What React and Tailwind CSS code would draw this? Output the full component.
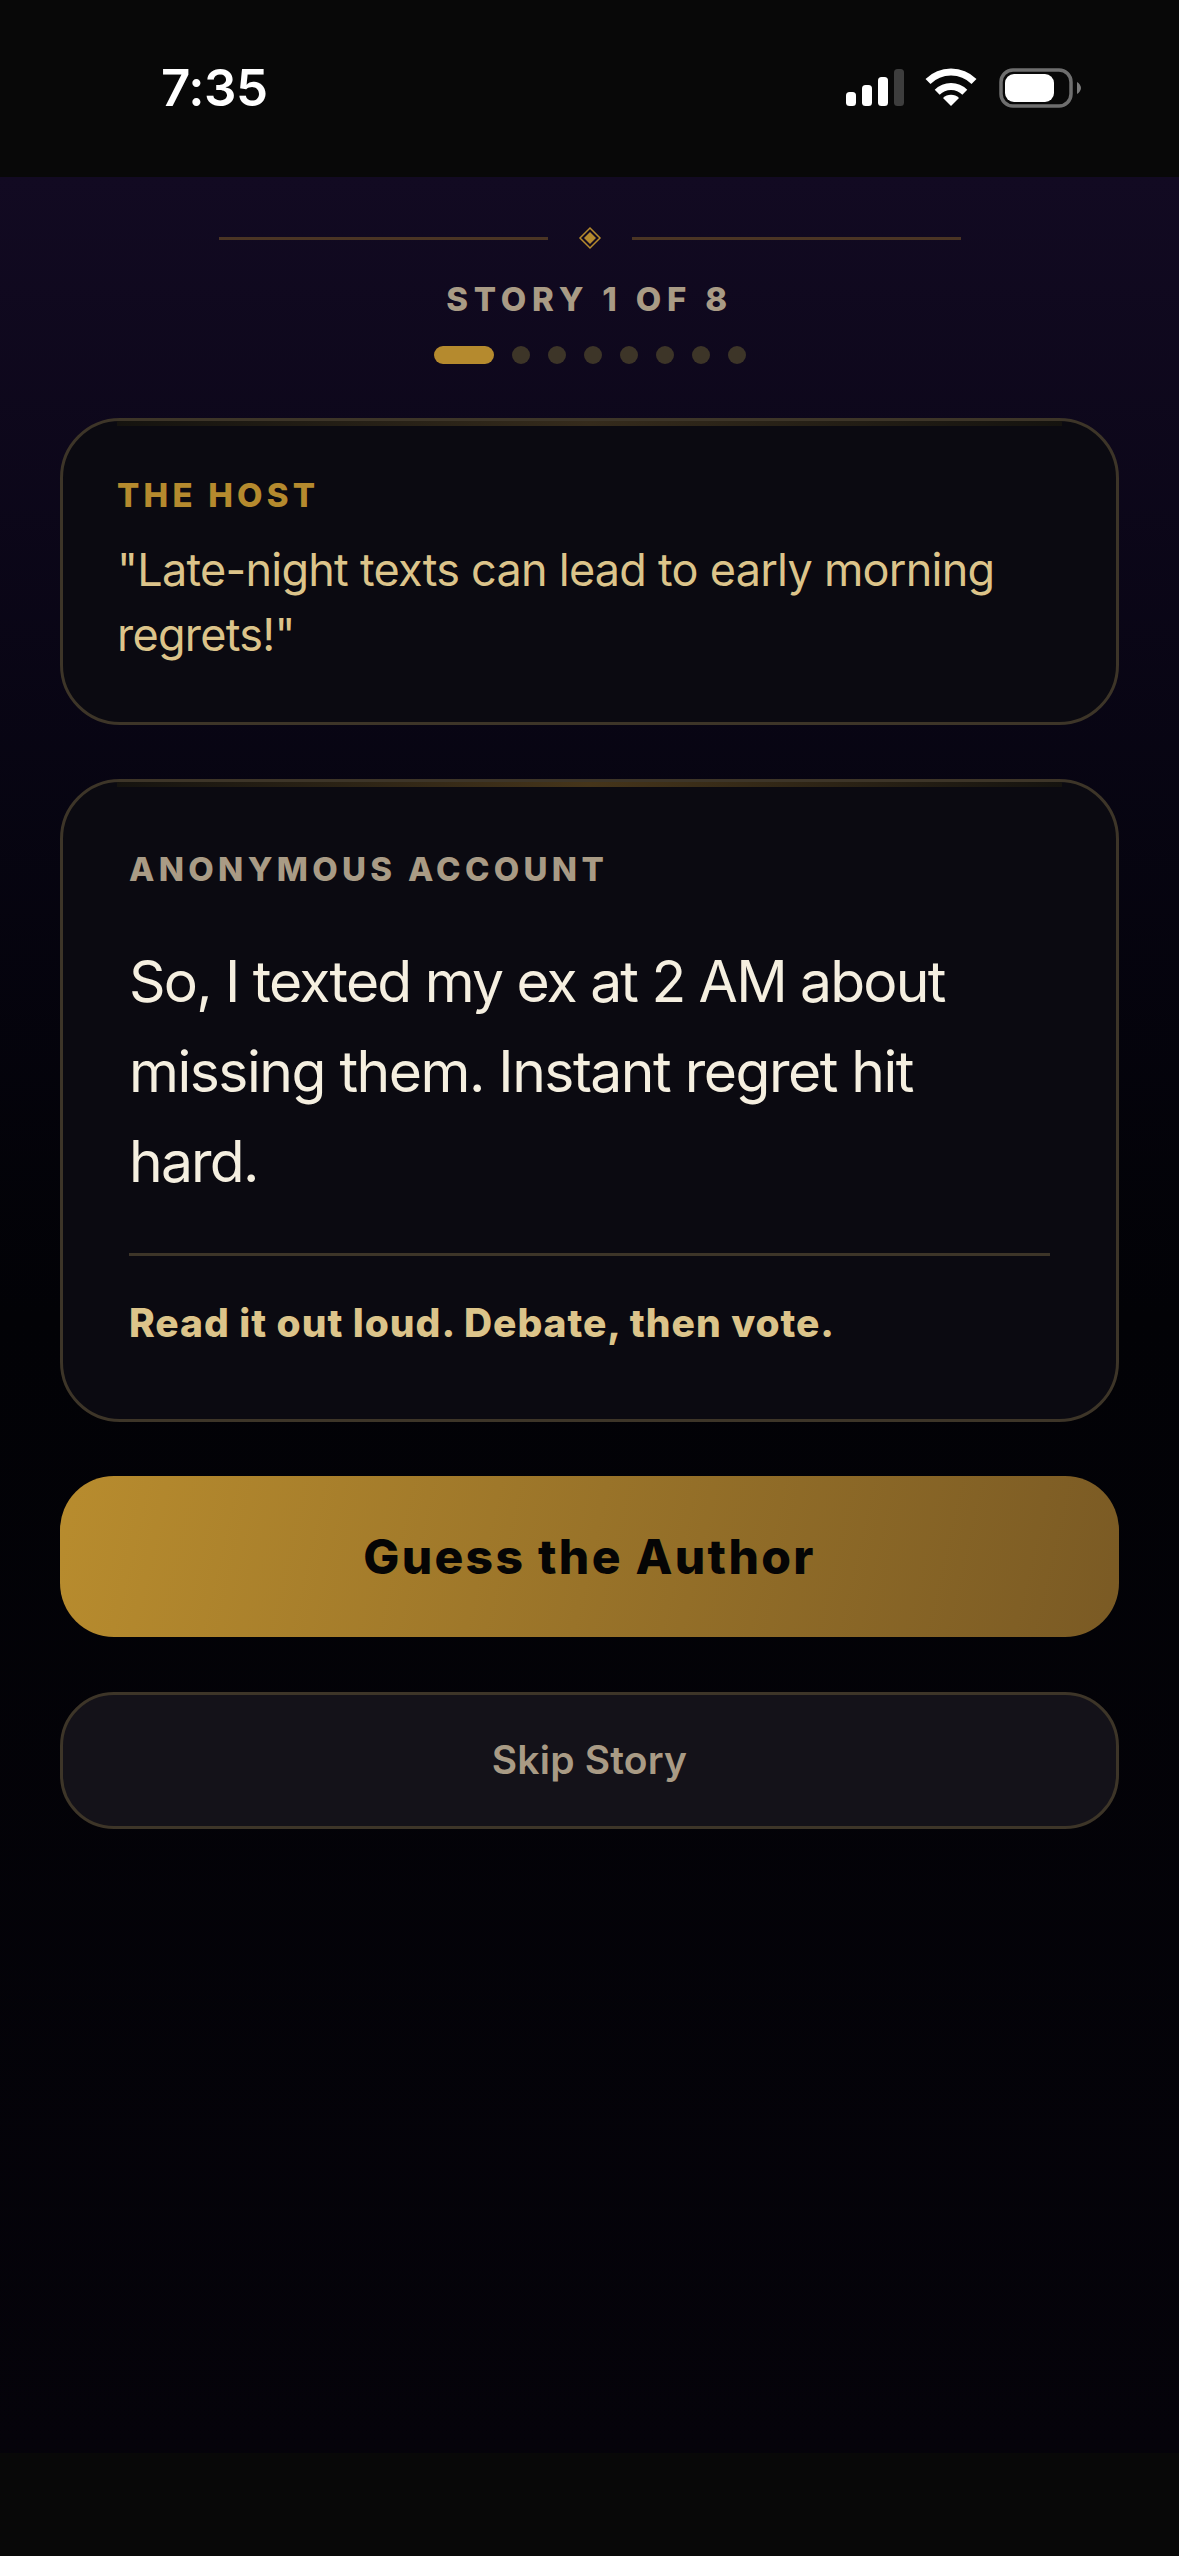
import React from "react";

function StatusIcons() {
  return (
    <svg width="237" height="40" viewBox="0 0 237 40" fill="none">
      {/* signal */}
      <rect x="0" y="24" width="10" height="14" rx="3.5" fill="#fff" />
      <rect x="16" y="17" width="10" height="21" rx="3.5" fill="#fff" />
      <rect x="32" y="9" width="10" height="29" rx="3.5" fill="#fff" />
      <rect x="48" y="1" width="10" height="37" rx="3.5" fill="#3d3d3d" />
      {/* wifi */}
      <path d="M82 13.5A32.500 32.500 0 0 1 128 13.500" stroke="#fff" strokeWidth="7" />
      <path d="M91.200 24.200A19.500 19.500 0 0 1 118.800 24.200" stroke="#fff" strokeWidth="7" />
      <path d="M105 38L97 30A11.300 11.300 0 0 1 113 30Z" fill="#fff" />
      {/* battery */}
      <rect x="155" y="2" width="70" height="36" rx="12" stroke="#6e6e6e" strokeWidth="3.500" />
      <rect x="159" y="6" width="49" height="28" rx="9" fill="#fff" />
      <path d="M231 14C233 15 235 17.500 235 20C235 22.500 233 25 231 26Z" fill="#7a7a7a" />
    </svg>
  );
}

function Diamond() {
  return (
    <svg width="24" height="24" viewBox="0 0 24 24" fill="none">
      <path d="M12 2L22 12L12 22L2 12Z" stroke="#b58a2e" strokeWidth="1.500" />
      <path d="M12 6L18 12L12 18L6 12Z" fill="#b58a2e" />
    </svg>
  );
}

function CardGlow({ strong }) {
  return (
    <div
      className={
        strong
          ? "absolute top-0 left-[54px] right-[54px] h-[5px] bg-gradient-to-r from-[#15130f] via-[#46351a] to-[#15130f]"
          : "absolute top-0 left-[54px] right-[54px] h-[5px] bg-gradient-to-r from-[#15130f] via-[#352b1c] to-[#15130f]"
      }
    />
  );
}

export default function App() {
  return (
    <main className="w-[1179px] h-[2556px] overflow-hidden flex flex-col font-['Inter',sans-serif] bg-[#05030a]">
      {/* Status bar */}
      <div className="h-[177px] shrink-0 bg-[#080808] flex items-start justify-between pl-[161px] pr-[96px] pt-[58px]">
        <span className="text-[51px] leading-[60px] font-semibold text-white tracking-[-0.5px]">7:35</span>
        <div className="pt-[10px]">
          <StatusIcons />
        </div>
      </div>

      <div className="flex-1 flex flex-col px-[60px] bg-gradient-to-b from-[#120a22] via-[#020206] via-[50%] to-[#05030a]">
        {/* Header */}
        <div className="flex flex-col items-center pt-[49px]">
          <div className="flex items-center w-[742px] gap-[30px] h-[24px]">
            <div className="flex-1 h-[3px] bg-[#4b3524]" />
            <Diamond />
            <div className="flex-1 h-[3px] bg-[#4b3524]" />
          </div>
          <div className="mt-[29px] text-[33px] leading-[40px] font-extrabold tracking-[5.8px] text-[#a99b85]">
            STORY 1 OF 8
          </div>
          <div className="mt-[27px] flex items-center gap-[18px]">
            <div className="w-[60px] h-[18px] rounded-full bg-[#b58a2e]" />
            {[1, 2, 3, 4, 5, 6, 7].map((i) => (
              <div key={i} className="w-[18px] h-[18px] rounded-full bg-[#3d3528]" />
            ))}
          </div>
        </div>

        {/* Host card */}
        <section className="relative mt-[54px] h-[307px] rounded-[60px] border-[3px] border-[#3d3528] bg-[#0b0a11] overflow-hidden pl-[54px] pr-[54px] pt-[54px]">
          <CardGlow />
          <div className="text-[33px] leading-[40px] font-extrabold tracking-[4.2px] text-[#b58a2e]">THE HOST</div>
          <p className="mt-[22px] text-[45px] leading-[65px] tracking-[-0.75px] text-[#dcc48a]">
            "Late-night texts can lead to early morning regrets!"
          </p>
        </section>

        {/* Story card */}
        <section className="relative mt-[54px] h-[643px] rounded-[60px] border-[3px] border-[#3d3528] bg-[#0b0a11] overflow-hidden px-[66px] pt-[67px]">
          <CardGlow strong />
          <div className="text-[33px] leading-[40px] font-extrabold tracking-[4.3px] text-[#a99b85]">ANONYMOUS ACCOUNT</div>
          <p className="mt-[48px] text-[57px] leading-[90px] tracking-[-1.8px] text-[#f5efe0] pr-[40px]">
            So, I texted my ex at 2 AM about <span className="tracking-[-1.5px]">missing them. Instant regret hit</span> hard.
          </p>
          <div className="mt-[46px] h-[3px] bg-[#3d3528]" />
          <p className="mt-[43px] text-[39px] leading-[48px] font-extrabold tracking-[0.95px] text-[#dcc48a]">
            Read it out loud. Debate, then vote.
          </p>
        </section>

        {/* Actions */}
        <button className="mt-[54px] h-[161px] rounded-[54px] bg-[linear-gradient(103deg,#b88c2e,#7a5a24)] text-[48px] font-extrabold tracking-[2.3px] text-[#050505]">
          Guess the Author
        </button>
        <button className="mt-[55px] h-[137px] rounded-[54px] border-[3px] border-[#3d3528] bg-[#141219] text-[39px] font-semibold tracking-[0.2px] text-[#a99b85]">
          Skip Story
        </button>
      </div>

      {/* Home indicator strip */}
      <div className="h-[103px] shrink-0 bg-[#080808]" />
    </main>
  );
}
